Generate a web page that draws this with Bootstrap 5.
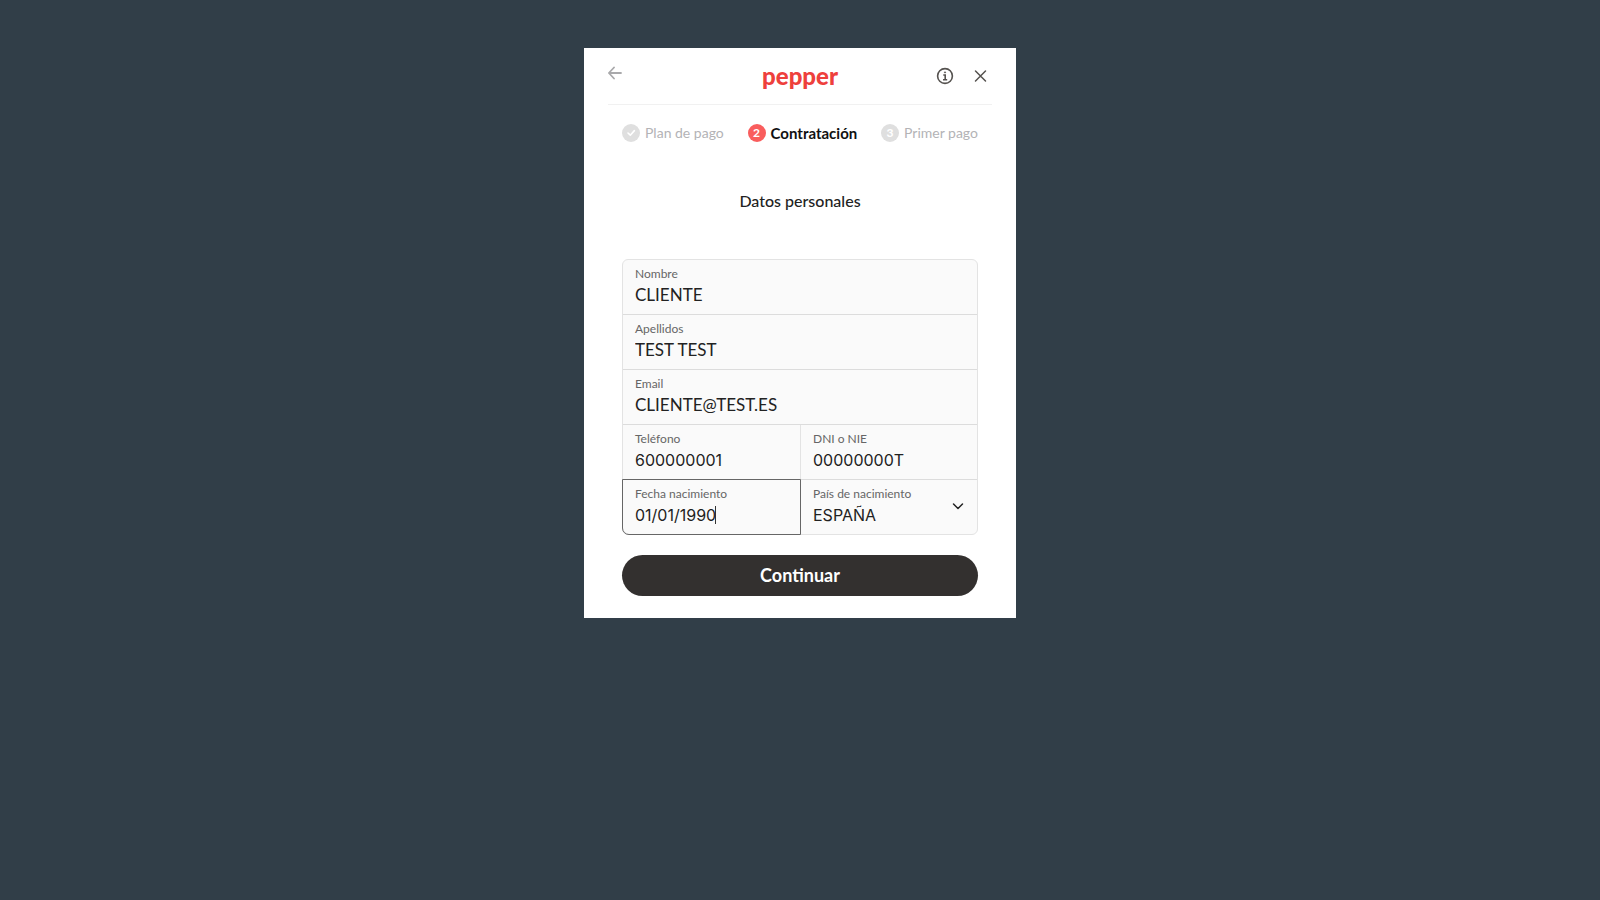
<!DOCTYPE html>
<html lang="es">
<head>
<meta charset="utf-8">
<meta name="viewport" content="width=device-width, initial-scale=1">
<title>Pepper - Datos personales</title>
<link href="https://cdn.jsdelivr.net/npm/bootstrap@5.3.0/dist/css/bootstrap.min.css" rel="stylesheet">
<style>
  body { background: #313e48; font-family: Lato, "Liberation Sans", sans-serif; color: #222; font-variant-ligatures: none; }
  .checkout { max-width: 432px; margin-top: 48px; padding: 0 24px 22px; background: #fff; }
  .topbar { height: 57px; border-bottom: 1px solid #f1f1f1; }
  .topbar .side { flex: 1 1 0; }
  .icon-btn { border: 0; padding: 0; background: none; display: block; line-height: 0; color: #55524f; }
  .icon-btn.back { color: #a9a9ab; margin-bottom: 6px; }
  .brand { font-weight: 900; font-size: 24px; line-height: 30px; color: #ee403c; }
  .inner { padding: 0 14px; }
  .steps { padding-top: 18px; font-size: 14px; line-height: 20px; color: #b3b3b6; }
  .steps .current { color: #111; font-size: 15px; font-weight: 700; }
  .dot { width: 18px; height: 18px; margin-right: 5px; border-radius: 50%; background: #dfdfdf; color: #fff; font-size: 12px; line-height: 18px; font-weight: 700; text-align: center; }
  .current .dot { background: #f95d5d; }
  .title { font-size: 16px; line-height: 24px; font-weight: 500; margin: 46px 0; }
  .fields { border: 1px solid #e3e3e3; border-radius: 6px; background: #fafafa; }
  .field { height: 55px; padding: 5px 12px; border-bottom: 1px solid #dcdcdc; }
  .field.last { border-bottom: 0; height: 54px; }
  .field.split { border-left: 1px solid #e3e3e3; }
  .field label { display: block; font-size: 12px; line-height: 18px; color: #666; }
  .field input, .field select { display: block; width: 100%; border: 0; padding: 0; background: none; color: #222; font-size: 17px; line-height: 24px; height: 24px; outline: 0; appearance: none; }
  .row .field input, .row .field select { font-family: Inter, sans-serif; font-size: 16px; }
  .field.active { position: relative; z-index: 1; outline: 1px solid #666; border-radius: 0 0 0 6px; }
  .row .field.active input { width: 80px; }
  .caret { width: 1px; height: 18px; background: #333; }
  .chevron { right: 13px; top: 20px; pointer-events: none; }
  .continue { height: 41px; margin-top: 20px; border: 0; border-radius: 21px; background: #33302f; color: #fff; font-size: 18px; line-height: 24px; font-weight: 700; padding: 0 0 2px; }
</style>
</head>
<body>
<main class="checkout mx-auto">
  <header class="topbar d-flex align-items-center">
    <div class="side">
      <button type="button" class="icon-btn back" aria-label="Volver">
        <svg width="14" height="14" viewBox="0 0 14 14" fill="none" stroke="currentColor" stroke-width="1.8" stroke-linecap="round" stroke-linejoin="round"><path d="M13 7H1M6 1.5L.9 7 6 12.5"/></svg>
      </button>
    </div>
    <div class="brand">pepper</div>
    <div class="side d-flex justify-content-end align-items-center">
      <button type="button" class="icon-btn" aria-label="Información">
        <svg width="18" height="18" viewBox="0 0 18 18" fill="none" stroke="currentColor" stroke-width="1.6"><circle cx="9" cy="9" r="7.4"/><path d="M7.3 8H9.2V12.6M7 12.7H11.2"/><circle cx="9" cy="5.4" r=".6" fill="currentColor" stroke-width=".8"/></svg>
      </button>
      <button type="button" class="icon-btn ms-3 me-1" aria-label="Cerrar">
        <svg width="18" height="16" viewBox="0 0 18 16" fill="none" stroke="currentColor" stroke-width="1.5" stroke-linecap="round"><path d="M5.5 3l10 10M15.5 3l-10 10"/></svg>
      </button>
    </div>
  </header>
  <div class="inner">
    <ol class="steps list-unstyled d-flex justify-content-between mb-0">
      <li class="d-flex align-items-center"><span class="dot"><svg class="d-block" width="18" height="18" viewBox="0 0 18 18" fill="none" stroke="#fff" stroke-width="1.6" stroke-linecap="round" stroke-linejoin="round"><path d="M6 9l2.3 2.2L12.4 6.6"/></svg></span>Plan de pago</li>
      <li class="current d-flex align-items-center"><span class="dot">2</span>Contratación</li>
      <li class="d-flex align-items-center"><span class="dot">3</span>Primer pago</li>
    </ol>
    <h1 class="title text-center">Datos personales</h1>
    <form>
      <div class="fields">
        <div class="field"><label for="nombre">Nombre</label><input id="nombre" type="text" value="CLIENTE"></div>
        <div class="field"><label for="apellidos">Apellidos</label><input id="apellidos" type="text" value="TEST TEST"></div>
        <div class="field"><label for="email">Email</label><input id="email" type="text" value="CLIENTE@TEST.ES"></div>
        <div class="row g-0">
          <div class="col-6 field"><label for="telefono">Teléfono</label><input id="telefono" type="tel" value="600000001"></div>
          <div class="col-6 field split"><label for="dni">DNI o NIE</label><input id="dni" type="text" value="00000000T"></div>
          <div class="col-6 field last active"><label for="fecha">Fecha nacimiento</label>
            <div class="d-flex align-items-center"><input id="fecha" type="text" value="01/01/1990"><span class="caret"></span></div>
          </div>
          <div class="col-6 field last split position-relative"><label for="pais">País de nacimiento</label>
            <select id="pais"><option>ESPAÑA</option></select>
            <svg class="chevron position-absolute" width="12" height="12" viewBox="0 0 12 12" fill="none" stroke="#222" stroke-width="1.5" stroke-linecap="round" stroke-linejoin="round"><path d="M1.5 4L6 8.5 10.5 4"/></svg>
          </div>
        </div>
      </div>
      <button type="submit" class="continue btn w-100">Continuar</button>
    </form>
  </div>
</main>
<script src="https://cdn.jsdelivr.net/npm/bootstrap@5.3.0/dist/js/bootstrap.bundle.min.js"></script>
</body>
</html>
